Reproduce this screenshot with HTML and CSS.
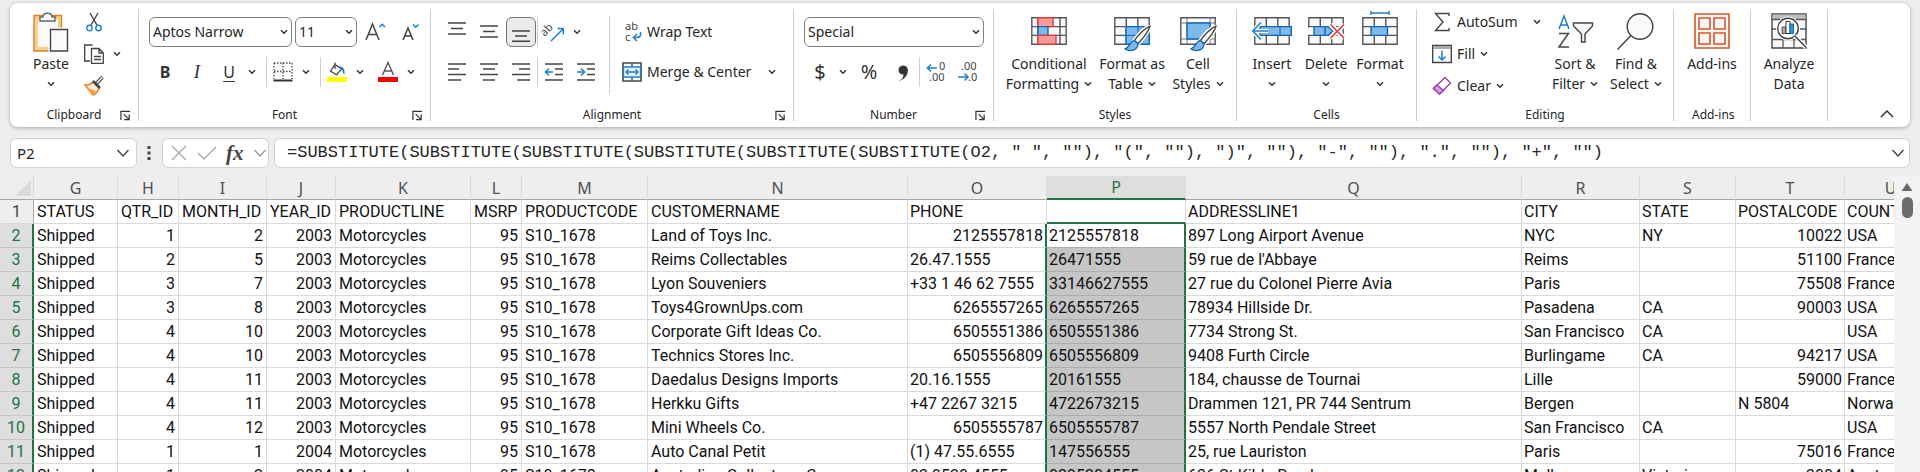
FILE: index.html
```html
<!DOCTYPE html>
<html lang="en">
<head>
<meta charset="utf-8">
<title>Sales data workbook</title>
<link rel="stylesheet" href="styles.css">
</head>
<body>
<svg class="defs" aria-hidden="true">
  <symbol id="chev" viewBox="0 0 8 8"><path d="M1 2.2 4 5.2 7 2.2" fill="none" stroke="#333" stroke-width="1.5"/></symbol>
  <symbol id="launch" viewBox="0 0 12 12"><path d="M1 11V1.5H11M4 4.5 9.5 10M10 5V10.5H4.5" fill="none" stroke="#333" stroke-width="1.3"/></symbol>
  <symbol id="grid" viewBox="0 0 36 28"><path d="M.8.8H35.2V27.2H.8Z" fill="#fafafa"/><path d="M.8.8H35.2V27.2H.8ZM.8 9.6H35.2M.8 18.4H35.2M12.3.8V27.2M23.8.8V27.2" fill="none" stroke="#555" stroke-width="1.4"/></symbol>
  <symbol id="brush" viewBox="0 0 26 26"><path d="M25 1C20 3 13 10 10 15L13.500 18C18 13 24 6 25 1Z" fill="#fff" stroke="#fff" stroke-width="4"/><path d="M25 1C20 3 13 10 10 15L13.500 18C18 13 24 6 25 1Z" fill="#fafafa" stroke="#444" stroke-width="1.300"/><path d="M10 15C6 15 6 21 1 23C6 26 13 25 13.500 18Z" fill="#7db9ec" stroke="#1267b0" stroke-width="1.300"/></symbol>
</svg>

<header class="ribbon">
  <section class="group g-clip">
    <div class="body">
      <button class="big paste"><svg class="ico" viewBox="0 0 40 40"><path d="M5 6H29V37H5Z" fill="#fafafa" stroke="#f8cf8b" stroke-width="4"/><path d="M3 3.500H30.500V39H3Z" fill="none" stroke="#d9822b" stroke-width="1.400"/><path d="M9 9V5H12C12 0 21 0 21 5H24V9Z" fill="#fff" stroke="#666" stroke-width="1.400"/><path d="M19.500 17.500H36.500V39H19.500Z" fill="#fafafa" stroke="#fff" stroke-width="4"/><path d="M19.500 17.500H36.500V39H19.500Z" fill="#fafafa" stroke="#444" stroke-width="1.400"/></svg><span>Paste</span><svg class="chev"><use href="#chev"/></svg></button>
      <div class="stack">
        <button class="line" aria-label="Cut"><svg class="i20" viewBox="0 0 20 20"><path d="M6 1 13 13M14 1 7 13" stroke="#444" stroke-width="1.400" fill="none"/><circle cx="5.500" cy="16" r="2.700" fill="none" stroke="#1e7fd0" stroke-width="1.400"/><circle cx="14.500" cy="16" r="2.700" fill="none" stroke="#1e7fd0" stroke-width="1.400"/></svg></button>
        <button class="line" aria-label="Copy"><svg class="i20" viewBox="0 0 20 20"><path d="M6 17H.700V1H8.500" fill="none" stroke="#444" stroke-width="1.300"/><path d="M7.500 4.500H15L19.300 9V19.300H7.500ZM15 4.500V9H19.300M10 12.500H17M10 15.500H17" fill="none" stroke="#444" stroke-width="1.300"/></svg><svg class="chev"><use href="#chev"/></svg></button>
        <button class="line" aria-label="Format painter"><svg class="i20" viewBox="0 0 20 20"><path d="M18.500 1 12 8" stroke="#444" stroke-width="3.500"/><path d="M18.500 1 12 8" stroke="#fff" stroke-width="1.200"/><path d="M1 9C4 9 7 8 9 6L15 12C14 15 12 18 9 19Z" fill="#fdebd3" stroke="#e07b1a" stroke-width="1.400"/><path d="M3 12 12 15 9 19Z" fill="#f5a03c"/><path d="M9 5 16 12" stroke="#444" stroke-width="2.500"/></svg></button>
      </div>
    </div>
    <footer><span>Clipboard</span><button class="launch" aria-label="Clipboard settings"><svg><use href="#launch"/></svg></button></footer>
  </section>

  <section class="group g-font">
    <div class="body rows">
      <div class="row gap3">
        <span class="pick w-font"><select aria-label="Font name"><option>Aptos Narrow</option></select><svg class="chev"><use href="#chev"/></svg></span>
        <span class="pick w-size"><select aria-label="Font size"><option>11</option></select><svg class="chev"><use href="#chev"/></svg></span>
        <button class="tool" aria-label="Increase font size"><svg class="i20" viewBox="0 0 20 20"><path d="M0 18 6.500 2 13 18M2.500 12.500H10.500" fill="none" stroke="#444" stroke-width="1.500"/><path d="M13.500 5 16.200 2.300 19 5" fill="none" stroke="#1e7fd0" stroke-width="1.500"/></svg></button>
        <button class="tool" aria-label="Decrease font size"><svg class="i20" viewBox="0 0 20 20"><path d="M2 18 7 6 12 18M3.500 14H10.500" fill="none" stroke="#444" stroke-width="1.500"/><path d="M12 2.500 14.700 5.200 17.500 2.500" fill="none" stroke="#1e7fd0" stroke-width="1.500"/></svg></button>
      </div>
      <div class="row">
        <button class="tool b">B</button><button class="tool i">I</button><button class="tool u">U</button><button class="drop" aria-label="Underline styles"><svg class="chev"><use href="#chev"/></svg></button><i class="sep gapl"></i>
        <button class="tool" aria-label="Borders"><svg class="i20" viewBox="0 0 20 20"><path d="M1 1H19M1 9.500H19M1 1V17M10 1V17M19 1V17" fill="none" stroke="#555" stroke-width="1.400" stroke-dasharray="1.600 1.400"/><path d="M.500 18.500H19.500" stroke="#333" stroke-width="2"/></svg></button><button class="drop" aria-label="Border styles"><svg class="chev"><use href="#chev"/></svg></button><i class="sep gapl"></i>
        <button class="tool" aria-label="Fill color"><svg class="i20" viewBox="0 0 20 20"><path d="M0 15H20V20H0Z" fill="#ff0"/><path d="M8 2.500 14.500 7 9.500 13 3.500 9ZM8 2.500V.500M8 4V7" fill="#fff" stroke="#444" stroke-width="1.300"/><path d="M12 4.500C17 4 18 8 17.500 12.500C15 11 15.500 8 14.500 7" fill="#2d84cc"/></svg></button><button class="drop" aria-label="Fill colors"><svg class="chev"><use href="#chev"/></svg></button>
        <button class="tool fontcolor" aria-label="Font color"><svg class="i20" viewBox="0 0 20 20"><path d="M0 15H20V20H0Z" fill="#f00"/><path d="M4.500 13 10 .500 15.500 13M6.500 9H13.500" fill="none" stroke="#555" stroke-width="1.400"/></svg></button><button class="drop" aria-label="Font colors"><svg class="chev"><use href="#chev"/></svg></button>
      </div>
    </div>
    <footer><span>Font</span><button class="launch" aria-label="Font settings"><svg><use href="#launch"/></svg></button></footer>
  </section>

  <section class="group g-align">
    <div class="body">
      <div class="rows">
        <div class="row">
          <button class="tool" aria-label="Top align"><svg class="i20" viewBox="0 0 20 20"><path d="M1 1H19M4 6.500H16M1 12H19" stroke="#444" stroke-width="1.400"/></svg></button>
          <button class="tool" aria-label="Middle align"><svg class="i20" viewBox="0 0 20 20"><path d="M1 4H19M4 9.500H16M1 15H19" stroke="#444" stroke-width="1.400"/></svg></button>
          <button class="tool on" aria-label="Bottom align"><svg class="i20" viewBox="0 0 20 20"><path d="M1 9H19M4 14H16M1 19.300H19" stroke="#444" stroke-width="1.400"/></svg></button><i class="sep"></i>
          <button class="tool" aria-label="Orientation"><svg class="i20" viewBox="0 0 20 20"><text class="glyph" x="-9" y="11" transform="rotate(-45 4 10)" dx="7">ab</text><path d="M7 19 19 7M13.500 6.500H19.300V12.500" fill="none" stroke="#1e7fd0" stroke-width="1.500"/></svg></button><button class="drop" aria-label="Orientation options"><svg class="chev"><use href="#chev"/></svg></button>
        </div>
        <div class="row">
          <button class="tool" aria-label="Align left"><svg class="i20" viewBox="0 0 20 20"><path d="M1 2H19M1 7H12M1 12.500H19M1 18H14" stroke="#444" stroke-width="1.400"/></svg></button>
          <button class="tool" aria-label="Center"><svg class="i20" viewBox="0 0 20 20"><path d="M1 2H19M4 7H16M1 12.500H19M4 18H16" stroke="#444" stroke-width="1.400"/></svg></button>
          <button class="tool" aria-label="Align right"><svg class="i20" viewBox="0 0 20 20"><path d="M1 2H19M8 7H19M1 12.500H19M6 18H19" stroke="#444" stroke-width="1.400"/></svg></button><i class="sep"></i>
          <button class="tool" aria-label="Decrease indent"><svg class="i20" viewBox="0 0 20 20"><path d="M1 2H19M11 7H19M11 12.500H19M1 18H19" stroke="#444" stroke-width="1.400"/><path d="M9 10H2M5 6.500 1.500 10 5 13.500" fill="none" stroke="#1e7fd0" stroke-width="1.500"/></svg></button>
          <button class="tool" aria-label="Increase indent"><svg class="i20" viewBox="0 0 20 20"><path d="M1 2H19M11 7H19M11 12.500H19M1 18H19" stroke="#444" stroke-width="1.400"/><path d="M1 10H8M5 6.500 8.500 10 5 13.500" fill="none" stroke="#1e7fd0" stroke-width="1.500"/></svg></button>
        </div>
      </div>
      <i class="sep tall"></i>
      <div class="rows">
        <div class="row"><button class="text"><svg class="i20" viewBox="0 0 20 20"><text class="glyph" x="3" y="8">ab</text><text class="glyph" x="3" y="19">c</text><path d="M18.500 10V13C18.500 15 17 15.500 11.500 15.500M15 12 11.300 15.500 15 19" fill="none" stroke="#1e7fd0" stroke-width="1.500"/></svg>Wrap Text</button></div>
        <div class="row"><button class="text"><svg class="i20" viewBox="0 0 20 20"><path d="M1 1H19V19H1Z" fill="#fff" stroke="#444" stroke-width="1.600"/><path d="M10 1V5M10 15V19" stroke="#444" stroke-width="1.400"/><path d="M1.500 5H18.500V15H1.500Z" fill="#eaf4fd" stroke="#1e7fd0" stroke-width="1.300"/><path d="M4 10H16M6.500 7.500 4 10 6.500 12.500M13.500 7.500 16 10 13.500 12.500" fill="none" stroke="#1e7fd0" stroke-width="1.400"/></svg>Merge &amp; Center</button><button class="drop far" aria-label="Merge options"><svg class="chev"><use href="#chev"/></svg></button></div>
      </div>
    </div>
    <footer><span>Alignment</span><button class="launch" aria-label="Alignment settings"><svg><use href="#launch"/></svg></button></footer>
  </section>

  <section class="group g-num">
    <div class="body rows">
      <div class="row"><span class="pick w-num"><select aria-label="Number format"><option>Special</option></select><svg class="chev"><use href="#chev"/></svg></span></div>
      <div class="row">
        <button class="tool sym" aria-label="Accounting format">$</button><button class="drop" aria-label="Currencies"><svg class="chev"><use href="#chev"/></svg></button>
        <button class="tool sym pct" aria-label="Percent style">%</button>
        <button class="tool" aria-label="Comma style"><svg class="i20" viewBox="0 0 20 20"><path d="M6 19C9 17.500 10.500 15 10.500 12.500C4 13 4 3.500 10 3.500C18 3.500 16 16.500 6 19Z" fill="#333"/></svg></button><i class="sep"></i>
        <button class="tool" aria-label="Increase decimal"><svg class="i20" viewBox="0 0 20 20"><text class="glyph" x="13" y="8">0</text><text class="glyph" x="3" y="19">.00</text><path d="M11 6H1.500M5 2.500 1.300 6 5 9.500" fill="none" stroke="#1e7fd0" stroke-width="1.500"/></svg></button>
        <button class="tool" aria-label="Decrease decimal"><svg class="i20" viewBox="0 0 20 20"><text class="glyph" x="3" y="8">.00</text><text class="glyph" x="10" y="19">.0</text><path d="M0 15H10M6.500 11.500 10 15 6.500 18.500" fill="none" stroke="#1e7fd0" stroke-width="1.500"/></svg></button>
      </div>
    </div>
    <footer><span>Number</span><button class="launch" aria-label="Number settings"><svg><use href="#launch"/></svg></button></footer>
  </section>

  <section class="group g-styles">
    <div class="body">
      <button class="big w-cond"><svg class="ico" viewBox="0 0 40 40"><path d="M2.800 5.800H37.200V32.200H2.800Z" fill="#fafafa"/><path d="M2.800 5.800H37.200V32.200H2.800ZM2.800 14.600H37.200M2.800 23.400H37.200M9 5.800V32.200M31 5.800V32.200" fill="none" stroke="#555" stroke-width="1.400"/><path d="M9 5.800H24V14.600H9Z" fill="#ff9a9a" stroke="#e03b3b" stroke-width="1.400"/><path d="M9 14.600H19V23.400H9Z" fill="#7db9ec" stroke="#1267b0" stroke-width="1.400"/><path d="M9 23.400H27V32.200H9Z" fill="#ff9a9a" stroke="#e03b3b" stroke-width="1.400"/></svg><span>Conditional</span><span>Formatting <svg class="chev"><use href="#chev"/></svg></span></button>
      <button class="big w-fat"><svg class="ico" viewBox="0 0 40 40"><use href="#grid" x="2" y="5" width="36" height="28"/><path d="M14 14.600H37.200V32.200H14Z" fill="#7db9ec" stroke="#1267b0" stroke-width="1.400"/><path d="M14 23.400H37M26 14.600V32" stroke="#1267b0"/><use href="#brush" x="12" y="13" width="27" height="27"/></svg><span>Format as</span><span>Table <svg class="chev"><use href="#chev"/></svg></span></button>
      <button class="big w-cs"><svg class="ico" viewBox="0 0 40 40"><path d="M2.800 5.800H37.200V32.200H2.800Z" fill="#fafafa" stroke="#555" stroke-width="1.400"/><path d="M2.800 11H37M2.800 27H37M9 5.800V32M32 5.800V32" stroke="#777"/><path d="M9 11H32V27H9Z" fill="#7db9ec" stroke="#1267b0" stroke-width="1.400"/><use href="#brush" x="12" y="13" width="27" height="27"/></svg><span>Cell</span><span>Styles <svg class="chev"><use href="#chev"/></svg></span></button>
    </div>
    <footer><span>Styles</span></footer>
  </section>

  <section class="group g-cells">
    <div class="body">
      <button class="big"><svg class="ico" viewBox="0 0 40 40"><use href="#grid" x="2" y="5" width="36" height="28"/><path d="M8 14.600H39.300V23.400H8Z" fill="#7db9ec" stroke="#1267b0" stroke-width="1.400"/><path d="M16 19H1M9 10.500.800 19 9 27.500" fill="none" stroke="#fff" stroke-width="4"/><path d="M28 14.600V23.400" stroke="#1267b0"/><path d="M16 19H1M9 10.500.800 19 9 27.500" fill="none" stroke="#1e7fd0" stroke-width="1.600"/></svg><span>Insert</span><svg class="chev"><use href="#chev"/></svg></button>
      <button class="big"><svg class="ico" viewBox="0 0 40 40"><use href="#grid" x="2" y="5" width="36" height="28"/><path d="M0 15.500H8V22.500H0Z" fill="#fff"/><path d="M8 14.600H22L27 19 22 23.400H8ZM19 14.600V23.400" fill="#7db9ec" stroke="#1267b0" stroke-width="1.400"/><path d="M24.500 12.500 38 26M38 12.500 24.500 26" stroke="#fff" stroke-width="5"/><path d="M24.500 12.500 38 26M38 12.500 24.500 26" stroke="#e03b3b" stroke-width="1.600"/></svg><span>Delete</span><svg class="chev"><use href="#chev"/></svg></button>
      <button class="big"><svg class="ico" viewBox="0 0 40 40"><use href="#grid" x="2" y="5" width="36" height="28"/><path d="M11 14.600H27.500V23.400H11Z" fill="#7db9ec" stroke="#1267b0" stroke-width="1.400"/><path d="M11 1H29M11-1V3M29-1V3" stroke="#1e7fd0" stroke-width="1.400"/></svg><span>Format</span><svg class="chev"><use href="#chev"/></svg></button>
    </div>
    <footer><span>Cells</span></footer>
  </section>

  <section class="group g-edit">
    <div class="body">
      <div class="stack">
        <button class="line"><svg class="i20" viewBox="0 0 20 20"><path d="M17 4V1.500H3.500L11 10 3.500 18.500H17V16" fill="none" stroke="#444" stroke-width="1.400"/></svg><span class="wide">AutoSum</span><svg class="chev"><use href="#chev"/></svg></button>
        <button class="line"><svg class="i20" viewBox="0 0 20 20"><path d="M.700 1.500H19.300V18.500H.700Z" fill="#fff" stroke="#444" stroke-width="1.400"/><path d="M1 2H19V5H1Z" fill="#aaa"/><path d="M10 6.500V16M6.500 12.500 10 16 13.500 12.500" fill="none" stroke="#1e7fd0" stroke-width="1.500"/></svg><span>Fill</span><svg class="chev"><use href="#chev"/></svg></button>
        <button class="line"><svg class="i20" viewBox="0 0 20 20"><path d="M13 1.500 18.500 7 7.500 18 1.500 12.500Z" fill="#fff" stroke="#9a3fb0" stroke-width="1.400"/><path d="M5 9 11.500 14.500 7.500 18 1.500 12.500Z" fill="#d99be3" stroke="#9a3fb0" stroke-width="1.400"/></svg><span>Clear</span><svg class="chev"><use href="#chev"/></svg></button>
      </div>
      <button class="big w-sort"><svg class="ico" viewBox="0 0 40 40"><path d="M4 17 9 4 14 17M5.500 13H12.500" fill="none" stroke="#1e7fd0" stroke-width="1.500"/><path d="M4 21.500H13.500L4 35H14" fill="none" stroke="#444" stroke-width="1.500"/><path d="M18.500 11H37.500V14L30 22V30H26.500V22L18.500 14Z" fill="#fafafa" stroke="#444" stroke-width="1.400"/></svg><span>Sort &amp;</span><span>Filter <svg class="chev"><use href="#chev"/></svg></span></button>
      <button class="big w-find"><svg class="ico" viewBox="0 0 40 40"><circle cx="24" cy="14.500" r="12.800" fill="#fafafa" stroke="#444" stroke-width="1.400"/><path d="M15 23.500 1.500 37.500" stroke="#444" stroke-width="1.500"/></svg><span>Find &amp;</span><span>Select <svg class="chev"><use href="#chev"/></svg></span></button>
    </div>
    <footer><span>Editing</span></footer>
  </section>

  <section class="group g-one">
    <div class="body"><button class="big"><svg class="ico" viewBox="0 0 40 40"><path d="M3 2H37V36H3ZM7 6H18V17H7ZM22 6H33V17H22ZM7 21H18V32H7ZM22 21H33V32H22Z" fill="#fff8f5" stroke="#d8532c" stroke-width="1.600"/></svg><span>Add-ins</span></button></div>
    <footer><span>Add-ins</span></footer>
  </section>

  <section class="group g-one">
    <div class="body"><button class="big"><svg class="ico" viewBox="0 0 40 40"><path d="M3 2H37V36H3Z" fill="#fafafa" stroke="#444" stroke-width="1.400"/><path d="M3.500 2.500H36.500V7H3.500Z" fill="#bdbdbd"/><path d="M3 7.500H37M3 17H37M3 27.500H37M14 27V36M25 27V36" stroke="#555" stroke-width="1.300"/><circle cx="19" cy="16.500" r="12" fill="#fff"/><circle cx="19" cy="16.500" r="10.300" fill="#fff" stroke="#444" stroke-width="1.400"/><path d="M26 24 37 35.500" stroke="#fff" stroke-width="4"/><path d="M26 24 37 35.500" stroke="#444" stroke-width="1.500"/><path d="M13 15H17V21.500H13Z" fill="#aaa" stroke="#555"/><path d="M17 9.500H21V21.500H17Z" fill="#fff" stroke="#333"/><path d="M21 12H24.500V21.500H21Z" fill="#2d94e0" stroke="#1267b0"/></svg><span>Analyze</span><span>Data</span></button></div>
    <footer></footer>
  </section>
  <button class="collapse" aria-label="Collapse ribbon"><svg viewBox="0 0 14 14"><path d="M1 10 7 4 13 10" fill="none" stroke="#333" stroke-width="1.500"/></svg></button>
</header>

<div class="fbar">
  <div class="box namebox"><input aria-label="Name box" value="P2"><svg class="chev14" viewBox="0 0 14 14"><path d="M1.500 4 7 10 12.500 4" fill="none" stroke="#444" stroke-width="1.400"/></svg></div>
  <svg class="dots" viewBox="0 0 4 16"><path d="M.500 1H3.500V4H.500ZM.500 6.500H3.500V9.500H.500ZM.500 12H3.500V15H.500Z" fill="#444"/></svg>
  <div class="box fx">
    <button aria-label="Cancel"><svg class="i16" viewBox="0 0 16 16"><path d="M1 1 15 15M15 1 1 15" stroke="#aaa" stroke-width="1.400"/></svg></button>
    <button aria-label="Enter"><svg class="i20" viewBox="0 0 20 16"><path d="M1 8 7 14 19 2" fill="none" stroke="#aaa" stroke-width="1.400"/></svg></button>
    <button class="fxs">fx</button>
    <svg class="chev14" viewBox="0 0 14 14"><path d="M1.500 4 7 10 12.500 4" fill="none" stroke="#999" stroke-width="1.400"/></svg>
  </div>
  <div class="box formula"><input aria-label="Formula" value="=SUBSTITUTE(SUBSTITUTE(SUBSTITUTE(SUBSTITUTE(SUBSTITUTE(SUBSTITUTE(O2, &quot; &quot;, &quot;&quot;), &quot;(&quot;, &quot;&quot;), &quot;)&quot;, &quot;&quot;), &quot;-&quot;, &quot;&quot;), &quot;.&quot;, &quot;&quot;), &quot;+&quot;, &quot;&quot;)"><svg class="chev14" viewBox="0 0 14 14"><path d="M1.500 4 7 10 12.500 4" fill="none" stroke="#444" stroke-width="1.400"/></svg></div>
</div>

<main class="sheet">
  <div class="view">
  <table>
    <colgroup><col class="c-h"><col class="c-g"><col class="c-hh"><col class="c-i"><col class="c-j"><col class="c-k"><col class="c-l"><col class="c-m"><col class="c-n"><col class="c-o"><col class="c-p"><col class="c-q"><col class="c-r"><col class="c-s"><col class="c-t"><col class="c-u"></colgroup>
    <thead><tr><th class="corner"><svg class="i16" viewBox="0 0 16 16"><path d="M16 0V16H0Z" fill="#dadada"/></svg></th><th>G</th><th>H</th><th>I</th><th>J</th><th>K</th><th>L</th><th>M</th><th>N</th><th>O</th><th class="cur">P</th><th>Q</th><th>R</th><th>S</th><th>T</th><th>U</th></tr></thead>
    <tbody>
    <tr class="first"><th>1</th><td>STATUS</td><td>QTR_ID</td><td>MONTH_ID</td><td>YEAR_ID</td><td>PRODUCTLINE</td><td>MSRP</td><td>PRODUCTCODE</td><td>CUSTOMERNAME</td><td>PHONE</td><td class="top"></td><td>ADDRESSLINE1</td><td>CITY</td><td>STATE</td><td>POSTALCODE</td><td>COUNTRY</td></tr>
    <tr><th>2</th><td>Shipped</td><td class="n">1</td><td class="n">2</td><td class="n">2003</td><td>Motorcycles</td><td class="n">95</td><td>S10_1678</td><td>Land of Toys Inc.</td><td class="n e">2125557818</td><td class="p act">2125557818</td><td>897 Long Airport Avenue</td><td>NYC</td><td>NY</td><td class="n">10022</td><td>USA</td></tr>
    <tr><th>3</th><td>Shipped</td><td class="n">2</td><td class="n">5</td><td class="n">2003</td><td>Motorcycles</td><td class="n">95</td><td>S10_1678</td><td>Reims Collectables</td><td class="e">26.47.1555</td><td class="p">26471555</td><td>59 rue de l'Abbaye</td><td>Reims</td><td></td><td class="n">51100</td><td>France</td></tr>
    <tr><th>4</th><td>Shipped</td><td class="n">3</td><td class="n">7</td><td class="n">2003</td><td>Motorcycles</td><td class="n">95</td><td>S10_1678</td><td>Lyon Souveniers</td><td class="e">+33 1 46 62 7555</td><td class="p">33146627555</td><td>27 rue du Colonel Pierre Avia</td><td>Paris</td><td></td><td class="n">75508</td><td>France</td></tr>
    <tr><th>5</th><td>Shipped</td><td class="n">3</td><td class="n">8</td><td class="n">2003</td><td>Motorcycles</td><td class="n">95</td><td>S10_1678</td><td>Toys4GrownUps.com</td><td class="n e">6265557265</td><td class="p">6265557265</td><td>78934 Hillside Dr.</td><td>Pasadena</td><td>CA</td><td class="n">90003</td><td>USA</td></tr>
    <tr><th>6</th><td>Shipped</td><td class="n">4</td><td class="n">10</td><td class="n">2003</td><td>Motorcycles</td><td class="n">95</td><td>S10_1678</td><td>Corporate Gift Ideas Co.</td><td class="n e">6505551386</td><td class="p">6505551386</td><td>7734 Strong St.</td><td>San Francisco</td><td>CA</td><td></td><td>USA</td></tr>
    <tr><th>7</th><td>Shipped</td><td class="n">4</td><td class="n">10</td><td class="n">2003</td><td>Motorcycles</td><td class="n">95</td><td>S10_1678</td><td>Technics Stores Inc.</td><td class="n e">6505556809</td><td class="p">6505556809</td><td>9408 Furth Circle</td><td>Burlingame</td><td>CA</td><td class="n">94217</td><td>USA</td></tr>
    <tr><th>8</th><td>Shipped</td><td class="n">4</td><td class="n">11</td><td class="n">2003</td><td>Motorcycles</td><td class="n">95</td><td>S10_1678</td><td>Daedalus Designs Imports</td><td class="e">20.16.1555</td><td class="p">20161555</td><td>184, chausse de Tournai</td><td>Lille</td><td></td><td class="n">59000</td><td>France</td></tr>
    <tr><th>9</th><td>Shipped</td><td class="n">4</td><td class="n">11</td><td class="n">2003</td><td>Motorcycles</td><td class="n">95</td><td>S10_1678</td><td>Herkku Gifts</td><td class="e">+47 2267 3215</td><td class="p">4722673215</td><td>Drammen 121, PR 744 Sentrum</td><td>Bergen</td><td></td><td>N 5804</td><td>Norway</td></tr>
    <tr><th>10</th><td>Shipped</td><td class="n">4</td><td class="n">12</td><td class="n">2003</td><td>Motorcycles</td><td class="n">95</td><td>S10_1678</td><td>Mini Wheels Co.</td><td class="n e">6505555787</td><td class="p">6505555787</td><td>5557 North Pendale Street</td><td>San Francisco</td><td>CA</td><td></td><td>USA</td></tr>
    <tr><th>11</th><td>Shipped</td><td class="n">1</td><td class="n">1</td><td class="n">2004</td><td>Motorcycles</td><td class="n">95</td><td>S10_1678</td><td>Auto Canal Petit</td><td class="e">(1) 47.55.6555</td><td class="p">147556555</td><td>25, rue Lauriston</td><td>Paris</td><td></td><td class="n">75016</td><td>France</td></tr>
    <tr><th>12</th><td>Shipped</td><td class="n">1</td><td class="n">2</td><td class="n">2004</td><td>Motorcycles</td><td class="n">95</td><td>S10_1678</td><td>Australian Collectors, Co.</td><td class="e">03 9520 4555</td><td class="p">0395204555</td><td>636 St Kilda Road</td><td>Melbourne</td><td>Victoria</td><td class="n">3004</td><td>Australia</td></tr>
    </tbody>
  </table>
  </div>
  <div class="scroll"><svg viewBox="0 0 12 10"><path d="M6 1 11.500 9H.500Z" fill="#6b6b6b"/></svg><div class="thumb"></div></div>
</main>
</body>
</html>
```
FILE: styles.css
```css
* { box-sizing: border-box; }
html, body { height: 100%; }
body {
  margin: 0;
  display: flex;
  flex-direction: column;
  overflow: hidden;
  background: #eeeeee;
  color: #262626;
  font: 14px/20px "Noto Sans", "Open Sans", sans-serif;
}
button, select, input { font: inherit; color: inherit; margin: 0; }
button { border: 0; background: none; padding: 0; }
svg { display: block; flex: none; overflow: visible; }
.defs { width: 0; height: 0; position: absolute; }
.chev { width: 8px; height: 8px; }
.chev14 { width: 14px; height: 14px; }
.i20 { width: 20px; height: 20px; }
.i16 { width: 16px; height: 16px; }
.glyph { font-size: 11px; fill: #444; }

/* Ribbon */
.ribbon {
  flex: none;
  display: flex;
  margin: 3px 10px 0;
  padding: 6px 0;
  background: #fff;
  border-radius: 8px;
  box-shadow: 0 1px 4px rgba(0, 0, 0, .3);
}
.group {
  flex: none;
  display: flex;
  flex-direction: column;
  border-right: 1px solid #cfcfcf;
}
.body { display: flex; height: 98px; padding-left: 10px; }
.group footer {
  display: grid;
  grid-template-columns: 18px 1fr 18px;
  align-items: center;
  height: 14px;
  padding-top: 2px;
  font-size: 12px;
  line-height: 12px;
  text-align: center;
  white-space: nowrap;
}
.group footer span { grid-column: 2; }
.launch svg { width: 11px; height: 11px; }
.g-clip { width: 129px; }
.g-font { width: 292px; }
.g-align { width: 363px; }
.g-num { width: 200px; }
.g-styles { width: 243px; }
.g-cells { width: 180px; }
.g-edit { width: 257px; }
.g-one { width: 77px; }

.rows { display: flex; flex-direction: column; gap: 10px; padding-top: 8px; }
.row { display: flex; align-items: center; height: 30px; }
.gap3 { gap: 3px; }
.tool { width: 32px; height: 30px; display: flex; align-items: center; justify-content: center; color: #333; }
.on { width: 30px; background: #ebebeb; border: 1px solid #777; border-radius: 6px; margin: 0 1px; }
.drop { width: 14px; height: 30px; display: flex; align-items: center; justify-content: center; }
.far { margin-left: 14px; }
.sep { width: 1px; height: 30px; background: #cfcfcf; }
.gapl { margin-left: 7px; }
.fontcolor { margin-left: 5px; }
.tall { height: 78px; margin: 7px 12px 0 7px; }
.b { font-weight: 700; font-size: 16px; }
.i { font-family: "Liberation Serif", serif; font-style: italic; font-size: 19px; }
.u { font-size: 16px; text-decoration: underline; text-underline-offset: 3px; }
.sym { font-size: 20px; }
.pct { margin: 0 2px 0 3px; }
.pick { display: grid; align-items: center; height: 30px; }
.pick > * { grid-area: 1 / 1; }
.pick .chev { justify-self: end; margin-right: 4px; pointer-events: none; }
.pick select {
  appearance: none;
  width: 100%;
  height: 30px;
  padding: 0 3px;
  border: 1px solid #808080;
  border-radius: 6px;
  background: #fff;
}
.w-font { width: 143px; }
.w-size { width: 62px; }
.w-num { width: 180px; }
.text { display: flex; align-items: center; gap: 5px; }

.stack { display: flex; flex-direction: column; gap: 6px; }
.line { display: flex; align-items: center; gap: 5px; height: 26px; }
.g-clip .body { padding-left: 16px; }
.g-clip .stack { margin-left: 8px; }
.g-clip .line { gap: 9px; }
.g-edit .body { padding-left: 15px; }
.g-edit .stack { width: 112px; }
.wide { width: 71px; text-align: left; }

.big {
  width: 54px;
  padding-top: 3px;
  display: flex;
  flex-direction: column;
  align-items: center;
  white-space: nowrap;
}
.big > span { display: flex; align-items: center; gap: 5px; height: 20px; }
.big > .chev { margin-top: 6px; }
.ico { width: 40px; height: 40px; margin-bottom: 2px; }
.paste { width: 50px; }
.w-cond { width: 90px; }
.w-fat { width: 76px; }
.w-cs { width: 56px; }
.g-cells .body { padding-left: 8px; }
.w-sort { width: 62px; }
.w-find { width: 60px; }
.g-one .body { padding: 0; justify-content: center; }
.collapse { margin: auto 16px 0 auto; }
.collapse svg { width: 14px; height: 14px; }

/* Formula bar */
.fbar { flex: none; display: flex; align-items: center; margin: 11px 10px 8px; height: 30px; }
.box { display: flex; align-items: center; height: 30px; background: #fff; border: 1px solid #d2d2d2; border-radius: 6px; }
.box input { flex: 1; min-width: 0; border: 0; padding: 0; background: none; outline: 0; }
.namebox { width: 127px; padding: 0 6px; }
.namebox input { font-size: 15px; }
.dots { width: 4px; height: 16px; margin: 0 11px 0 10px; }
.fx { width: 107px; padding: 0 1px 0 8px; justify-content: space-between; }
.fxs { font: italic 700 21px/24px "Liberation Serif", serif; color: #444; }
.formula { flex: 1; margin-left: 5px; padding: 0 4px 0 12px; }
.formula input { font: 17px/24px "Liberation Mono", monospace; }

/* Worksheet grid */
.sheet { flex: 1; min-height: 0; display: flex; }
.view { flex: 1; min-width: 0; overflow: hidden; }
table { width: 1937px; table-layout: fixed; border-collapse: separate; border-spacing: 0; font: 16px/22px Roboto, sans-serif; color: #111; }
.c-h { width: 34px; } .c-g { width: 84px; } .c-hh { width: 61px; } .c-i { width: 88px; }
.c-j { width: 69px; } .c-k { width: 135px; } .c-l { width: 51px; } .c-m { width: 126px; }
.c-n { width: 260px; } .c-o { width: 139px; } .c-p { width: 139px; } .c-q { width: 336px; }
.c-r { width: 118px; } .c-s { width: 96px; } .c-t { width: 109px; } .c-u { width: 92px; }
th { font-weight: 400; padding: 0; }
thead th { height: 24px; font: 16px/22px "Noto Sans", sans-serif; color: #505050; border-right: 1px solid #dcdcdc; border-bottom: 1px solid #a6a6a6; }
.corner svg { margin: 0 2px 0 auto; }
thead .cur { background: #dedede; color: #217346; border-bottom: 2px solid #217346; }
td { height: 24px; padding: 0 2px; background: #fff; border-right: 1px solid #dadada; border-bottom: 1px solid #dadada; white-space: nowrap; overflow: hidden; }
td:nth-child(-n+9) { padding: 0 3px; }
tbody th { background: #dedede; color: #217346; border-right: 2px solid #217346; border-bottom: 1px solid #c6c6c6; }
.first th { background: #eee; color: #444; border-right: 1px solid #a6a6a6; border-bottom-color: #dadada; }
.n { text-align: right; }
.e { border-right: 2px solid #217346; }
.p { background: #c6c6c6; border-right: 2px solid #217346; border-bottom-color: #adadad; }
.act { background: #fff; }
.top { border-bottom: 2px solid #217346; }
.scroll { width: 26px; flex: none; display: flex; flex-direction: column; align-items: center; gap: 5px; padding-top: 6px; background: #f3f3f3; }
.scroll svg { width: 12px; height: 10px; }
.thumb { width: 11px; height: 21px; border-radius: 6px; background: #6b6b6b; }
```
